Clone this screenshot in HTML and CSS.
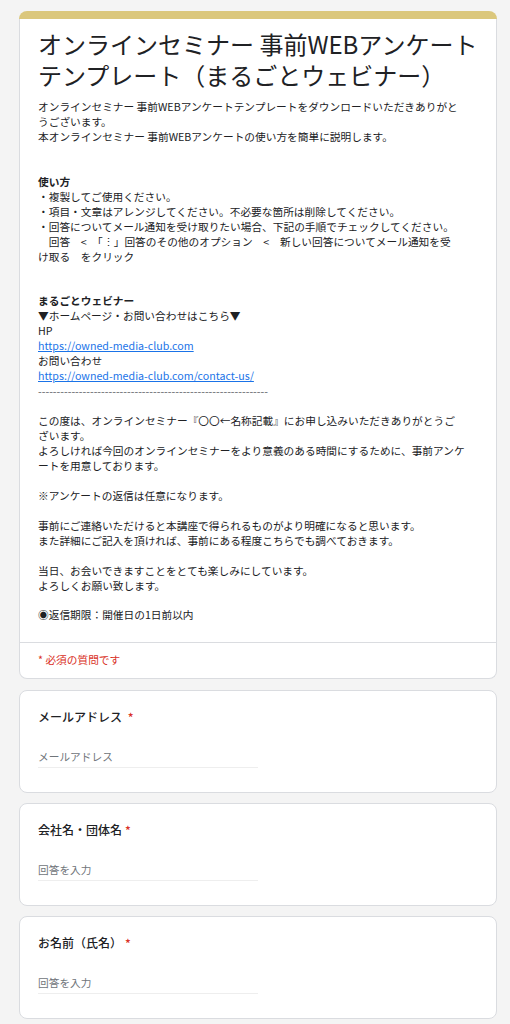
FILE: index.html
```html
<!DOCTYPE html>
<html lang="ja">
<head>
<meta charset="utf-8">
<title>オンラインセミナー 事前WEBアンケートテンプレート（まるごとウェビナー）</title>
<link rel="stylesheet" href="styles.css">
</head>
<body>
<main class="form">
  <section class="header-card">
    <div class="accent"></div>
    <div class="header-body">
      <div class="header-main">
        <h1 class="form-title">オンラインセミナー 事前WEBアンケートテンプレート（まるごとウェビナー）</h1>
<div class="form-desc">オンラインセミナー 事前WEBアンケートテンプレートをダウンロードいただきありがと
うございます。
本オンラインセミナー 事前WEBアンケートの使い方を簡単に説明します。


<b>使い方</b>
・複製してご使用ください。
・項目・文章はアレンジしてください。不必要な箇所は削除してください。
・回答についてメール通知を受け取りたい場合、下記の手順でチェックしてください。
　回答　<　「⋮」回答のその他のオプション　<　新しい回答についてメール通知を受
け取る　をクリック


<b>まるごとウェビナー</b>
▼ホームページ・お問い合わせはこちら▼
HP
<a href="#">https://owned-media-club.com</a>
お問い合わせ
<a href="#">https://owned-media-club.com/contact-us/</a>
<span class="dashes">--------------------------------------------------------------</span>

この度は、オンラインセミナー『〇〇←名称記載』にお申し込みいただきありがとうご
ざいます。
よろしければ今回のオンラインセミナーをより意義のある時間にするために、事前アンケ
ートを用意しております。

※アンケートの返信は任意になります。

事前にご連絡いただけると本講座で得られるものがより明確になると思います。
また詳細にご記入を頂ければ、事前にある程度こちらでも調べておきます。

当日、お会いできますことをとても楽しみにしています。
よろしくお願い致します。

◉返信期限：開催日の1日前以内</div>
      </div>
      <div class="required-note">* 必須の質問です</div>
    </div>
  </section>

  <section class="q-card">
    <div class="q-title">メールアドレス <span class="star">*</span></div>
    <div class="q-input">メールアドレス</div>
  </section>

  <section class="q-card">
    <div class="q-title">会社名・団体名<span class="star">*</span></div>
    <div class="q-input">回答を入力</div>
  </section>

  <section class="q-card">
    <div class="q-title">お名前（氏名）<span class="star">*</span></div>
    <div class="q-input">回答を入力</div>
  </section>
</main>
</body>
</html>
```

FILE: styles.css
```css
html, body {
  margin: 0;
  padding: 0;
  background: #f4f4f4;
}

body {
  font-family: "Noto Sans CJK JP", "Noto Sans", sans-serif;
  color: #202124;
}

.form {
  width: 478px;
  margin-left: 19px;
  padding-top: 11px;
  display: flex;
  flex-direction: column;
  gap: 10px;
}

.header-card {
  display: flex;
  flex-direction: column;
  margin-bottom: 1px;
}

.accent {
  height: 8px;
  background: #dbc77c;
  border-radius: 8px 8px 0 0;
}

.header-body {
  background: #fff;
  border: 1px solid #dadce0;
  border-top: none;
  border-radius: 0 0 8px 8px;
}

.header-main {
  padding: 9px 18px 19px 18px;
  border-bottom: 1px solid #dadce0;
}

.form-title {
  margin: 0;
  font-size: 24px;
  font-weight: 400;
  line-height: 31px;
  color: #202124;
}

.form-desc {
  margin-top: 10px;
  font-size: 10.7px;
  line-height: 14.95px;
  white-space: pre;
  color: #202124;
}

.form-desc b {
  font-weight: 700;
}

.form-desc a {
  color: #1a73e8;
  text-decoration: underline;
}

.dashes {
  color: #5f6368;
}

.required-note {
  padding: 9px 18px 11px 18px;
  font-size: 10.7px;
  line-height: 15px;
  color: #d93025;
}

.q-card {
  background: #fff;
  border: 1px solid #dadce0;
  border-radius: 8px;
  padding: 17px 18px 24px 18px;
}

.q-title {
  font-size: 12px;
  line-height: 18px;
  font-weight: 500;
  color: #202124;
}

.star {
  color: #d93025;
  margin-left: 3px;
}

.q-input {
  margin-top: 23px;
  width: 50%;
  font-size: 10.7px;
  line-height: 15px;
  padding-bottom: 3px;
  border-bottom: 1px solid #eeeeee;
  color: #70757a;
}
```
